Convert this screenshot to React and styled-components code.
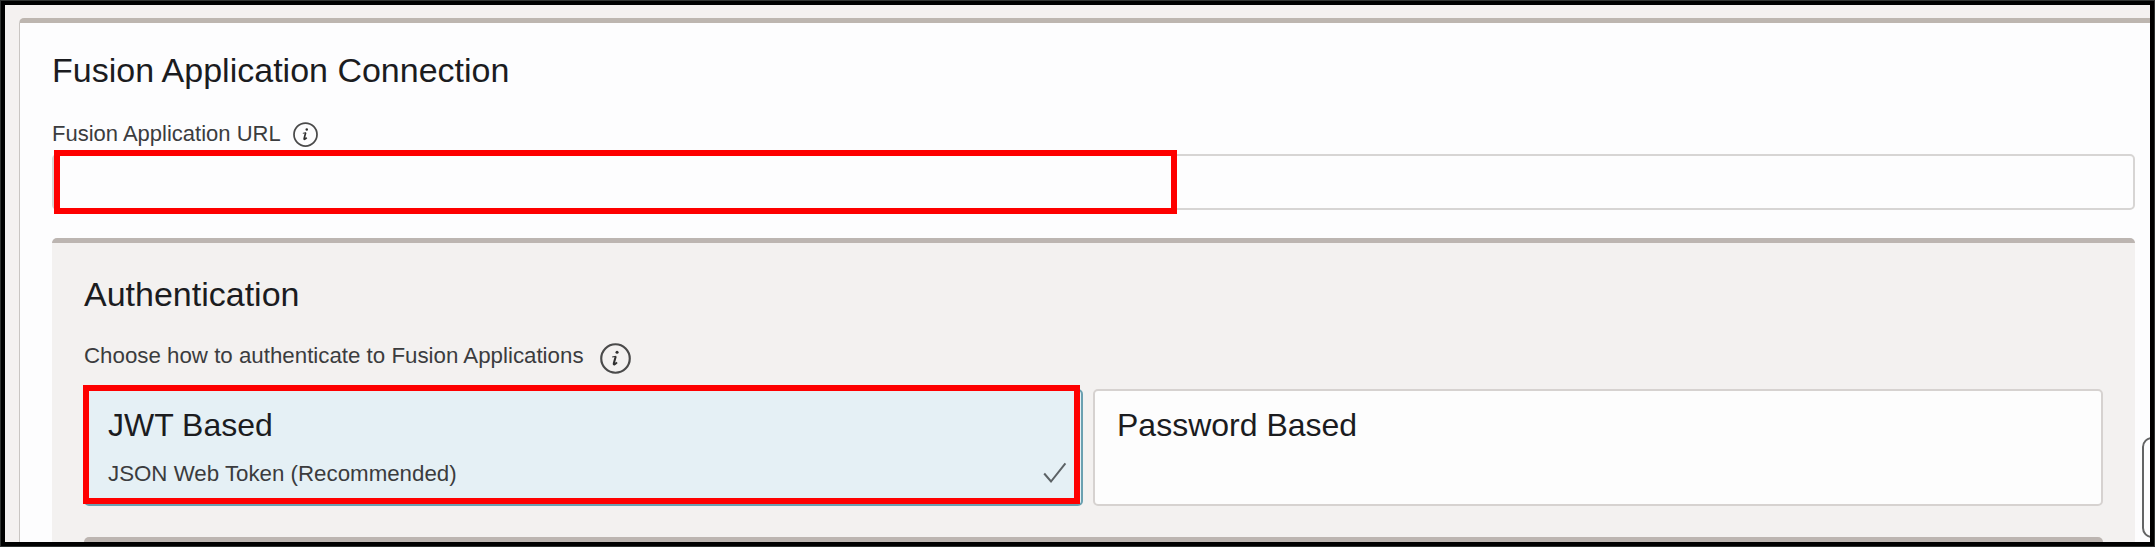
import React from "react";
import styled, { createGlobalStyle } from "styled-components";

const GlobalStyle = createGlobalStyle`
  *, *::before, *::after { box-sizing: border-box; }
  body { margin: 0; font-family: "Liberation Sans", Arial, sans-serif; color: #1b1c1f; }
`;

const Frame = styled.div`
  height: 547px;
  border: 1px solid #303332;
  background: #000;
  padding: 4px;
`;

const Page = styled.main`
  position: relative;
  height: 537px;
  overflow: hidden;
  background: #f4f1f0;
  padding: 13px 0 0 14px;
`;

const Panel = styled.section`
  height: 560px;
  margin-right: -10px;
  padding: 27px 24px 0 32px;
  background: #fdfdfe;
  border: 1px solid #c9c5c2;
  border-top: 5px solid #bdb6b0;
  border-radius: 5px 0 0 0;
`;

const Heading = styled.h2`
  margin: 0;
  font-size: 34px;
  line-height: 40px;
  font-weight: 400;
`;

const LabelRow = styled.div`
  display: flex;
  align-items: center;
  gap: ${(p) => p.$gap}px;
  height: ${(p) => p.$height}px;
  margin: ${(p) => p.$margin};
`;

const Label = styled.label`
  font-size: ${(p) => p.$size || 22}px;
  line-height: 28px;
  color: #3b3c3e;
  white-space: nowrap;
  padding-bottom: ${(p) => p.$lift || 0}px;
`;

const Field = styled.div`
  position: relative;
`;

const Input = styled.input`
  display: block;
  width: 100%;
  height: 56px;
  border: 2px solid #d7d5d4;
  border-radius: 5px;
  background: #fdfdfe;
  outline: none;
`;

const Highlight = styled.div`
  position: absolute;
  top: ${(p) => p.$top}px;
  left: ${(p) => p.$left}px;
  width: ${(p) => p.$width}px;
  height: ${(p) => p.$height}px;
  border: 6px solid #fe0000;
  pointer-events: none;
`;

const SubPanel = styled.section`
  height: 400px;
  margin-top: 28px;
  padding: 31px 32px 0;
  background: #f3f1f0;
  border-top: 5px solid #bcb5b1;
  border-radius: 5px 5px 0 0;
`;

const Options = styled.div`
  position: relative;
  display: grid;
  grid-template-columns: 999px 1010px;
  justify-content: space-between;
`;

const Option = styled.div`
  position: relative;
  height: 117px;
  padding: 15px 22px;
  border: 2px solid ${(p) => (p.$selected ? "#6aa0b0" : "#d6d2d0")};
  border-radius: 5px;
  background: ${(p) => (p.$selected ? "#e5f0f5" : "#fdfdfd")};
`;

const OptionTitle = styled.div`
  font-size: 32px;
  line-height: 38px;
`;

const OptionFooter = styled.div`
  display: flex;
  justify-content: space-between;
  align-items: flex-start;
  margin: 16px -8px 0 0;

  svg {
    margin-top: 2px;
  }
`;

const NextPanel = styled.div`
  height: 40px;
  margin-top: 31px;
  border-top: 5px solid #bcb5b1;
  border-radius: 5px 5px 0 0;
`;

const HelpTab = styled.button`
  position: absolute;
  top: 432px;
  left: 2137px;
  width: 40px;
  height: 101px;
  border: 2px solid #636465;
  border-radius: 10px;
  background: #fdfdfe;
`;

const InfoIcon = ({ size }) => (
  <svg width={size} height={size} viewBox="0 0 30 30" aria-hidden="true">
    <circle cx="15" cy="15" r="13.8" fill="none" stroke="#4a4a4a" strokeWidth="2.1" />
    <circle cx="16.5" cy="9" r="1.5" fill="#303030" />
    <path d="M11.8 13.6l3.9-.8" fill="none" stroke="#303030" strokeWidth="1.1" />
    <path d="M15.2 13l-1.8 6.6c-.4 1.7.9 1.6 3-.8" fill="none" stroke="#303030" strokeWidth="2" />
  </svg>
);

const CheckIcon = () => (
  <svg width="24" height="22" viewBox="0 0 24 22" aria-hidden="true">
    <path d="M1.2 11.5l6.8 8L22.4 1.3" fill="none" stroke="#5c6265" strokeWidth="2" />
  </svg>
);

export default function App() {
  return (
    <>
      <GlobalStyle />
      <Frame>
        <Page>
          <Panel>
            <Heading>Fusion Application Connection</Heading>
            <LabelRow $gap={12} $height={28} $margin="30px 0 6px">
              <Label htmlFor="url">Fusion Application URL</Label>
              <InfoIcon size={25} />
            </LabelRow>
            <Field>
              <Input id="url" />
              <Highlight $top={-4} $left={2} $width={1123} $height={64} />
            </Field>
            <SubPanel>
              <Heading>Authentication</Heading>
              <LabelRow $gap={16} $height={32} $margin="28px 0 15px">
                <Label as="span" $size={22.3} $lift={4}>
                  Choose how to authenticate to Fusion Applications
                </Label>
                <InfoIcon size={31} />
              </LabelRow>
              <Options>
                <Option $selected>
                  <OptionTitle>JWT Based</OptionTitle>
                  <OptionFooter>
                    <Label as="span" $size={22.3}>JSON Web Token (Recommended)</Label>
                    <CheckIcon />
                  </OptionFooter>
                </Option>
                <Option>
                  <OptionTitle>Password Based</OptionTitle>
                </Option>
                <Highlight $top={-4} $left={-1} $width={997} $height={119} />
              </Options>
              <NextPanel />
            </SubPanel>
          </Panel>
          <HelpTab aria-label="Help" />
        </Page>
      </Frame>
    </>
  );
}
